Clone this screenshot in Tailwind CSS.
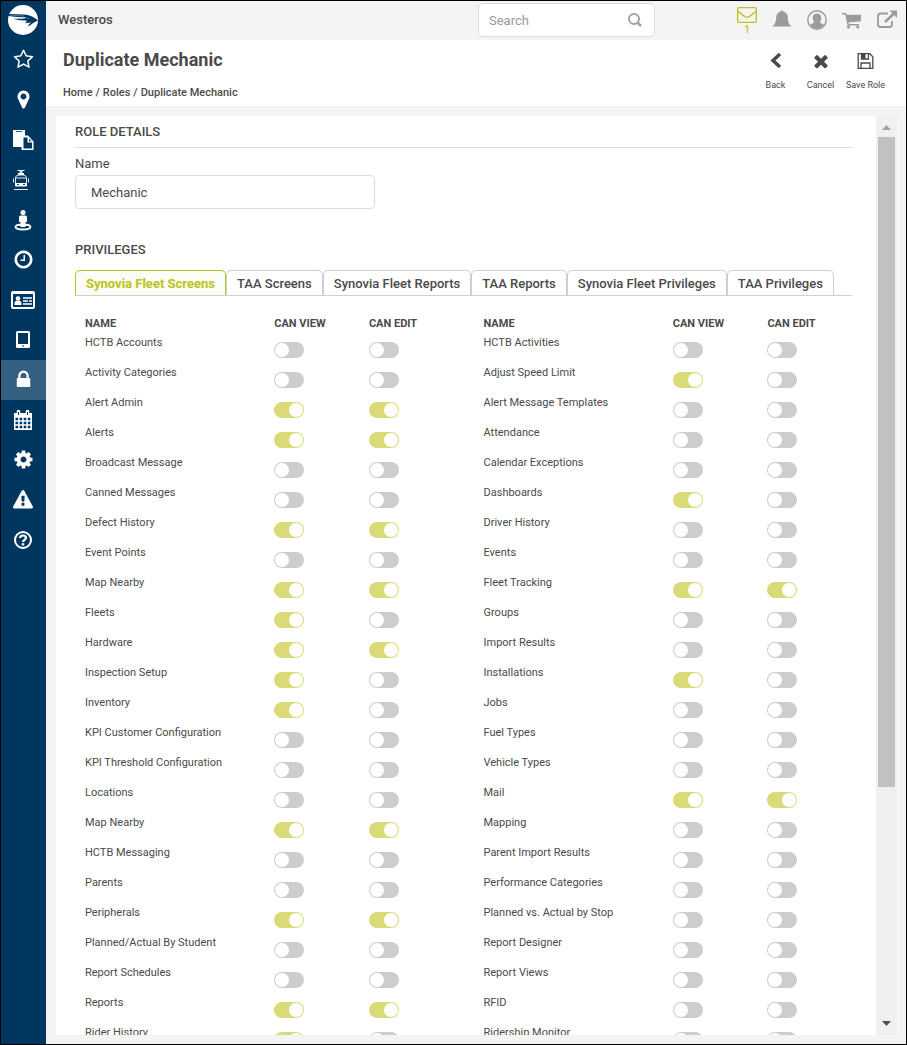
<!DOCTYPE html>
<html lang="en">
  <head>
    <meta charset="UTF-8" />
    <meta name="viewport" content="width=device-width, initial-scale=1.0" />
    <title>Duplicate Mechanic</title>
    <script src="https://cdn.jsdelivr.net/npm/@tailwindcss/browser@4"></script>
  </head>
  <body class="flex h-screen overflow-hidden border border-black bg-[#f4f4f4] font-[Roboto,sans-serif] text-[#4a4a4a]">
    <!-- Sidebar -->
    <nav class="flex w-[45px] shrink-0 flex-col bg-[#003761] text-white" aria-label="Main">
      <a href="#" class="flex h-[39px] items-center justify-center pr-px pb-px" aria-label="Dashboard">
        <svg class="size-[30px]" viewBox="0 0 30 30">
          <circle cx="15" cy="15" r="15" fill="#fff" />
          <path d="M1 9l15 .5Q24 10 30 15.500 26 17 20.500 21.500q-.5-2.500 3-4l-7 .7q3-1.200 1.500-2.700-7 .5-13-2 7 .5 11 0 2.500-.5 1-1.500Q8 12.500.5 11z" fill="#003761" />
          <path d="M2 10.200l14 .8M15 12.500l6 1" stroke="#7f9bb0" stroke-width=".600" />
        </svg>
      </a>
      <a href="#" class="flex h-10 items-center justify-center pr-px pb-0.5" aria-label="Favorites">
        <svg class="size-[21px]" viewBox="0 0 1792 1792" fill="currentColor"><path d="M1201 1004l306-297-422-62-189-382-189 382-422 62 306 297-73 421 378-199 377 199zm527-357q0 22-26 48l-363 354 86 500q1 7 1 20 0 50-41 50-19 0-40-12l-449-236-449 236q-22 12-40 12-21 0-31.5-14.5t-10.5-35.5q0-6 2-20l86-500-364-354q-25-27-25-48 0-37 56-46l502-73 225-455q19-41 49-41t49 41l225 455 502 73q56 9 56 46z" /></svg>
      </a>
      <a href="#" class="flex h-10 items-center justify-center pr-px pb-0.5" aria-label="Map">
        <svg class="size-[21px]" viewBox="0 0 1792 1792" fill="currentColor"><path d="M1152 640q0-106-75-181t-181-75-181 75-75 181 75 181 181 75 181-75 75-181zm256 0q0 109-33 179l-364 774q-16 33-47.5 52t-67.5 19-67.5-19-46.5-52l-365-774q-33-70-33-179 0-212 150-362t362-150 362 150 150 362z" /></svg>
      </a>
      <a href="#" class="flex h-10 items-center justify-center pr-px" aria-label="Documents">
        <svg class="size-6" viewBox="0 0 24 24">
          <path d="M2 2h12v6h-3v11H2z" fill="#fff" />
          <path d="M5 3.500h6" stroke="#003761" stroke-width=".800" />
          <path d="M10.500 7.500h6.500l5.500 6v8.500h-12z" fill="#fff" />
          <path d="M12.500 9.500h4v5h4.500v6h-8.500z" fill="#003761" />
          <path d="M18 10.500l2.500 2.800H18z" fill="#003761" />
        </svg>
      </a>
      <a href="#" class="flex h-10 items-center justify-center pr-[5px]" aria-label="Buses">
        <svg class="h-[22px] w-5" viewBox="0 0 20 22" fill="none" stroke="#fff" stroke-width=".900">
          <path d="M6.500 1.500h7M8 1.500l4 3M12 1.500l-4 3" />
          <path d="M7 4h6v2H7z" fill="#fff" stroke="none" />
          <path d="M4.500 8.500Q5 6 8 6h4q3 0 3.500 2.500v8h-11zM4.500 9h11M2.500 9.500v4M17.500 9.500v4" />
          <path d="M4 14h12v2.500q0 1-1 1H5q-1 0-1-1z" fill="#fff" stroke="none" />
          <path d="M3 20.500h14" />
          <path d="M6 15.500h2M12 15.500h2" stroke="#003761" />
        </svg>
      </a>
      <a href="#" class="flex h-10 items-center justify-center pr-px" aria-label="Students">
        <svg class="h-[22px] w-5" viewBox="0 0 20 22">
          <ellipse cx="10" cy="18" rx="7.500" ry="2.500" fill="none" stroke="#fff" stroke-width="1.800" />
          <circle cx="10" cy="3.500" r="2.500" fill="#fff" />
          <path d="M7.500 6.500h5q1.500 0 1.500 1.500v5h-1.500v5h-5v-5H6V8q0-1.500 1.500-1.500z" fill="#fff" />
        </svg>
      </a>
      <a href="#" class="flex h-10 items-center justify-center pr-px pb-0.5" aria-label="Time">
        <svg class="size-[21px]" viewBox="0 0 1792 1792" fill="currentColor"><path d="M1024 544v448q0 14-9 23t-23 9h-320q-14 0-23-9t-9-23v-64q0-14 9-23t23-9h224v-352q0-14 9-23t23-9h64q14 0 23 9t9 23zm416 352q0-148-73-273t-198-198-273-73-273 73-198 198-73 273 73 273 198 198 273 73 273-73 198-198 73-273zm224 0q0 209-103 385.500t-279.500 279.500-385.500 103-385.500-103-279.500-279.500-103-385.500 103-385.500 279.500-279.500 385.500-103 385.500 103 279.500 279.500 103 385.500z" /></svg>
      </a>
      <a href="#" class="flex h-10 items-center justify-center pr-px" aria-label="ID cards">
        <svg class="h-[18px] w-6" viewBox="0 0 24 18">
          <rect x="1" y="1" width="22" height="16" rx="1" fill="none" stroke="#fff" stroke-width="2" />
          <path d="M1 2h22" stroke="#fff" stroke-width="2" />
          <circle cx="7" cy="7.500" r="2.300" fill="#fff" />
          <path d="M3.500 14v-2q0-2.500 3.500-2.500t3.500 2.500v2z" fill="#fff" />
          <path d="M12 7h9M12 10h5M18 10h3M12 13h9" stroke="#fff" stroke-width="1.500" />
        </svg>
      </a>
      <a href="#" class="flex h-10 items-center justify-center pr-px pb-px" aria-label="Tablets">
        <svg class="h-[17px] w-[14px]" viewBox="0 0 14 17">
          <rect width="14" height="17" rx="1.500" fill="#fff" />
          <path d="M2 2h10v11H2z" fill="#003761" />
          <path d="M6 15h2" stroke="#003761" />
        </svg>
      </a>
      <a href="#" class="flex h-10 items-center justify-center bg-[#335f81] pr-px pb-0.5" aria-label="Security" aria-current="page">
        <svg class="size-[21px]" viewBox="0 0 1792 1792" fill="currentColor"><path d="M640 768h512v-192q0-106-75-181t-181-75-181 75-75 181v192zm832 96v576q0 40-28 68t-68 28h-960q-40 0-68-28t-28-68v-576q0-40 28-68t68-28h32v-192q0-184 132-316t316-132 316 132 132 316v192h32q40 0 68 28t28 68z" /></svg>
      </a>
      <a href="#" class="flex h-10 items-center justify-center pr-px" aria-label="Calendar">
        <svg class="size-5" viewBox="0 0 20 20">
          <path d="M1 3h18v17H1z" fill="#fff" />
          <path d="M5.500 1.500v3M14.500 1.500v3" stroke="#fff" stroke-width="3.500" stroke-linecap="round" />
          <path d="M5.500 2v3M14.500 2v3" stroke="#003761" />
          <path d="M2.500 9h15M2.500 13h15M2.500 17h15" stroke="#003761" stroke-width="2.500" stroke-dasharray="2.600 1.500" />
        </svg>
      </a>
      <a href="#" class="flex h-10 items-center justify-center pr-px pb-0.5" aria-label="Settings">
        <svg class="size-[21px]" viewBox="0 0 1792 1792" fill="currentColor"><path d="M1152 896q0-106-75-181t-181-75-181 75-75 181 75 181 181 75 181-75 75-181zm512-109v222q0 12-8 23t-20 13l-185 28q-19 54-39 91 35 50 107 138 10 12 10 25t-9 23q-27 37-99 108t-94 71q-12 0-26-9l-138-108q-44 23-91 38-16 136-29 186-7 28-36 28h-222q-14 0-24.500-8.500t-11.500-21.500l-28-184q-49-16-90-37l-141 107q-10 9-25 9-14 0-25-11-126-114-165-168-7-10-7-23 0-12 8-23 15-21 51-66.500t54-70.500q-27-50-41-99l-183-27q-13-2-21-12.500t-8-23.500v-222q0-12 8-23t19-13l186-28q14-46 39-92-40-57-107-138-10-12-10-24 0-10 9-23 26-36 98.500-107.500t94.500-71.500q13 0 26 10l138 107q44-23 91-38 16-136 29-186 7-28 36-28h222q14 0 24.500 8.500t11.500 21.500l28 184q49 16 90 37l142-107q9-9 24-9 13 0 25 10 129 119 165 170 7 8 7 22 0 12-8 23-15 21-51 66.500t-54 70.500q26 50 41 98l183 28q13 2 21 12.500t8 23.500z" /></svg>
      </a>
      <a href="#" class="flex h-10 items-center justify-center pr-px" aria-label="Alerts">
        <svg class="size-5" viewBox="0 0 1792 1792" fill="currentColor"><path d="M1024 1375v-190q0-14-9.500-23.500t-22.500-9.500h-192q-13 0-22.500 9.500t-9.500 23.500v190q0 14 9.500 23.500t22.500 9.500h192q13 0 22.500-9.500t9.500-23.500zm-2-374l18-459q0-12-10-19-13-11-24-11h-220q-11 0-24 11-10 7-10 21l17 457q0 10 10 16.500t24 6.500h185q14 0 23.500-6.500t10.500-16.500zm-14-934l768 1408q35 63-2 126-17 29-46.500 46t-63.500 17h-1536q-34 0-63.500-17t-46.500-46q-37-63-2-126l768-1408q17-31 47-49t65-18 65 18 47 49z" /></svg>
      </a>
      <a href="#" class="flex h-10 items-center justify-center pr-px" aria-label="Help">
        <svg class="size-5" viewBox="0 0 20 20" fill="none" stroke="#fff">
          <circle cx="10" cy="10" r="8" stroke-width="2" />
          <path d="M6.800 8Q7.300 5.500 10 5.500t3 2.300c0 2-3 2-3 4.200" stroke-width="2.200" />
          <path d="M10 13.200v2.300" stroke-width="2.400" />
        </svg>
      </a>
    </nav>

    <div class="flex min-w-0 flex-1 flex-col">
      <!-- Top bar -->
      <header class="flex h-[39px] shrink-0 items-center pr-[9px] pb-px pl-3">
        <span class="text-[13px] font-medium">Westeros</span>
        <div class="ml-auto flex h-[34px] w-[177px] items-center rounded-[5px] border border-[#dcdcdc] bg-white px-2.5">
          <input type="search" placeholder="Search" aria-label="Search" class="min-w-0 flex-1 pt-px text-[13px] outline-none placeholder:text-[#999]" />
          <svg class="mr-0.5 size-[14px] shrink-0" viewBox="0 0 14 14" fill="none" stroke="#a3a3a3" stroke-width="2"><circle cx="6" cy="6" r="5" /><path d="M9 9l4 4" stroke-width="2.500" /></svg>
        </div>
        <div class="ml-[82px] flex items-center gap-[15px] text-[#9b9b9b]">
          <a href="#" class="flex w-5 flex-col items-center pt-1 text-[#bdc220]" aria-label="1 message">
            <svg class="h-4 w-5" viewBox="0 0 20 16" fill="none" stroke="currentColor" stroke-width="1.300"><rect x=".700" y=".700" width="18.600" height="14.600" rx="1" /><path d="M1 4q5 5 9 6.500Q14 9 19 4" /></svg>
            <span class="text-[10px] leading-[14px] font-medium">1</span>
          </a>
          <a href="#" aria-label="Notifications">
            <svg class="h-5 w-5" viewBox="0 0 20 20" fill="currentColor"><path d="M10 0q1.200 0 1.200 1.500Q15.500 2.500 15.800 7c.2 5 1 7 3.700 9.500H.5C3.200 14 4 12 4.200 7 4.500 2.500 8.800 1.500 8.800 1.500 8.800 0 10 0zM7.500 17.500h5q-.5 2.500-2.500 2.500t-2.500-2.500z" /></svg>
          </a>
          <a href="#" aria-label="Account">
            <svg class="size-5" viewBox="0 0 20 20"><circle cx="10" cy="10" r="9.200" fill="none" stroke="currentColor" stroke-width="1.400" /><path d="M10 3.500c3 0 4.300 2 4.300 4.500 0 1.500-.6 3-1.600 4 .3 1.200 2.300 1.300 4.300 2.800A8.300 8.300 0 0 1 3 14.800c2-1.500 4-1.600 4.300-2.800-1-1-1.600-2.500-1.600-4 0-2.500 1.300-4.500 4.300-4.500z" fill="currentColor" /></svg>
          </a>
          <a href="#" aria-label="Cart">
            <svg class="h-5 w-5" viewBox="0 0 20 20" fill="currentColor"><path d="M0 3h4.200l.5 1.800H19v6.400L6.500 12.500l.3 1.500H17v1.500H5.500L3.200 4.500H0z" /><circle cx="6.500" cy="17" r="1.600" /><circle cx="15.800" cy="17" r="1.600" /></svg>
          </a>
          <a href="#" aria-label="Open in new window">
            <svg class="h-5 w-5" viewBox="0 0 20 20" fill="none" stroke="currentColor"><path d="M11 3.500H3.500Q1 3.500 1 6v8.500Q1 17 3.500 17h9q2.500 0 2.500-2.500V11" stroke-width="1.800" /><path d="M8 12L17 3.500" stroke-width="2.500" /><path d="M12.500.500H20V8z" fill="currentColor" stroke="none" /></svg>
          </a>
        </div>
      </header>

      <!-- Page header -->
      <section class="flex h-[66px] shrink-0 justify-between bg-white pr-[18px] pl-[17px]">
        <div>
          <h1 class="pt-2 text-[18px] leading-6 font-bold">Duplicate Mechanic</h1>
          <nav class="flex gap-[3px] pt-3 text-[11px] leading-[18px] font-medium" aria-label="Breadcrumb">
            <a href="#">Home</a><span>/</span><a href="#">Roles</a><span>/</span><span>Duplicate Mechanic</span>
          </nav>
        </div>
        <div class="flex pt-[11px] text-[9px] leading-3">
          <button type="button" class="flex w-[45px] flex-col items-center gap-2">
            <svg class="size-5" viewBox="0 0 20 20" fill="none" stroke="currentColor" stroke-width="3.500"><path d="M14 3L7 9.500l7 6.500" /></svg>
            Back
          </button>
          <button type="button" class="flex w-[45px] flex-col items-center gap-2">
            <svg class="size-5" viewBox="0 0 1792 1792" fill="currentColor"><path d="M1490 1322q0 40-28 68l-136 136q-28 28-68 28t-68-28l-294-294-294 294q-28 28-68 28t-68-28l-136-136q-28-28-28-68t28-68l294-294-294-294q-28-28-28-68t28-68l136-136q28-28 68-28t68 28l294 294 294-294q28-28 68-28t68 28l136 136q28 28 28 68t-28 68l-294 294 294 294q28 28 28 68z" /></svg>
            Cancel
          </button>
          <button type="button" class="flex w-[45px] flex-col items-center gap-2 whitespace-nowrap">
            <svg class="size-5" viewBox="0 0 20 20" fill="none" stroke="currentColor" stroke-width="1.300"><path d="M2.200 2.700h11.600l3 3v11.600H2.200z" /><path d="M5 17v-5h9v5M5.500 3v5h7V3" /><path d="M5 2.500h4.500V8H5z" fill="currentColor" stroke="none" /></svg>
            Save Role
          </button>
        </div>
      </section>

      <!-- Content -->
      <div class="flex min-h-0 flex-1 pt-2.5 pr-[9px] pb-[9px] pl-2.5">
        <main class="min-w-0 flex-1 overflow-hidden bg-white pr-6 pl-[19px]">
          <h2 class="border-b border-[#dedede] pt-2 pb-[7px] text-[13px] leading-4 font-medium">ROLE DETAILS</h2>
          <label for="role-name" class="block pt-[7px] text-[13px] leading-[18px]">Name</label>
          <input id="role-name" type="text" value="Mechanic" class="mt-0.5 block h-[34px] w-[300px] rounded-[4px] border border-[#dcdcdc] px-[15px] text-[13px] outline-none" />

          <h2 class="pt-8 text-[13px] leading-[18px] font-medium">PRIVILEGES</h2>
          <div class="mt-[11px] flex border-b border-[#cfcfcf] text-[13px] leading-6 font-medium whitespace-nowrap" role="tablist">
            <button type="button" role="tab" aria-selected="true" class="rounded-t-[5px] border border-b-0 border-[#bdc220] bg-[#fbfcf3] px-2.5 pt-px leading-[23px] font-bold text-[#bdc220]">Synovia Fleet Screens</button>
            <button type="button" role="tab" class="rounded-t-[5px] border border-b-0 border-[#cfcfcf] px-2.5 pt-px leading-[23px]">TAA Screens</button>
            <button type="button" role="tab" class="rounded-t-[5px] border border-b-0 border-[#cfcfcf] px-2.5 pt-px leading-[23px]">Synovia Fleet Reports</button>
            <button type="button" role="tab" class="rounded-t-[5px] border border-b-0 border-[#cfcfcf] px-2.5 pt-px leading-[23px]">TAA Reports</button>
            <button type="button" role="tab" class="rounded-t-[5px] border border-b-0 border-[#cfcfcf] px-2.5 pt-px leading-[23px]">Synovia Fleet Privileges</button>
            <button type="button" role="tab" class="rounded-t-[5px] border border-b-0 border-[#cfcfcf] px-2.5 pt-px leading-[23px]">TAA Privileges</button>
          </div>

          <div id="privileges" class="-mr-5 grid grid-cols-2 pt-[18px]"></div>
        </main>

        <!-- Scroll bar -->
        <div class="flex w-[21px] shrink-0 flex-col items-center bg-[#f0f0f0]" aria-hidden="true">
          <svg class="h-[21px] w-[17px] shrink-0" viewBox="0 0 17 21" fill="#a3a3a3"><path d="M4 14l4.500-5 4.500 5z" /></svg>
          <div class="w-[17px] flex-[650] bg-[#c1c1c1]"></div>
          <div class="flex-[227]"></div>
          <svg class="h-[21px] w-[17px] shrink-0" viewBox="0 0 17 21" fill="#505050"><path d="M4 7l4.500 5L13 7z" /></svg>
        </div>
      </div>
    </div>

    <script>
      // [name, can view, can edit]
      const columns = [
        [
          ["HCTB Accounts", 0, 0],
          ["Activity Categories", 0, 0],
          ["Alert Admin", 1, 1],
          ["Alerts", 1, 1],
          ["Broadcast Message", 0, 0],
          ["Canned Messages", 0, 0],
          ["Defect History", 1, 1],
          ["Event Points", 0, 0],
          ["Map Nearby", 1, 1],
          ["Fleets", 1, 0],
          ["Hardware", 1, 1],
          ["Inspection Setup", 1, 0],
          ["Inventory", 1, 0],
          ["KPI Customer Configuration", 0, 0],
          ["KPI Threshold Configuration", 0, 0],
          ["Locations", 0, 0],
          ["Map Nearby", 1, 1],
          ["HCTB Messaging", 0, 0],
          ["Parents", 0, 0],
          ["Peripherals", 1, 1],
          ["Planned/Actual By Student", 0, 0],
          ["Report Schedules", 0, 0],
          ["Reports", 1, 1],
          ["Rider History", 1, 0],
        ],
        [
          ["HCTB Activities", 0, 0],
          ["Adjust Speed Limit", 1, 0],
          ["Alert Message Templates", 0, 0],
          ["Attendance", 0, 0],
          ["Calendar Exceptions", 0, 0],
          ["Dashboards", 1, 0],
          ["Driver History", 0, 0],
          ["Events", 0, 0],
          ["Fleet Tracking", 1, 1],
          ["Groups", 0, 0],
          ["Import Results", 0, 0],
          ["Installations", 1, 0],
          ["Jobs", 0, 0],
          ["Fuel Types", 0, 0],
          ["Vehicle Types", 0, 0],
          ["Mail", 1, 1],
          ["Mapping", 0, 0],
          ["Parent Import Results", 0, 0],
          ["Performance Categories", 0, 0],
          ["Planned vs. Actual by Stop", 0, 0],
          ["Report Designer", 0, 0],
          ["Report Views", 0, 0],
          ["RFID", 0, 0],
          ["Ridership Monitor", 0, 0],
        ],
      ];

      const toggle = (label, on) => `
        <td class="p-0 pt-2.5 align-top">
          <input type="checkbox" aria-label="${label}" ${on ? "checked" : ""}
            class="block h-4 w-[30px] appearance-none rounded-full bg-[#cdcdcd] p-px before:block before:size-[14px] before:rounded-full before:bg-white checked:bg-[#dadb78] checked:before:ml-[14px]" />
        </td>`;

      document.getElementById("privileges").innerHTML = columns
        .map(
          (rows) => `
          <div class="px-2.5">
            <table class="w-full table-fixed text-left text-[11px]">
              <thead>
                <tr class="h-[18px] leading-4">
                  <th class="w-1/2 p-0 pt-0.5 font-bold">NAME</th>
                  <th class="w-1/4 p-0 pt-0.5 font-bold">CAN VIEW</th>
                  <th class="w-1/4 p-0 pt-0.5 font-bold">CAN EDIT</th>
                </tr>
              </thead>
              <tbody>
                ${rows
                  .map(
                    ([name, view, edit]) => `
                  <tr class="h-[30px]">
                    <td class="p-0 align-top leading-[22px]">${name}</td>
                    ${toggle(name + " can view", view)}
                    ${toggle(name + " can edit", edit)}
                  </tr>`
                  )
                  .join("")}
              </tbody>
            </table>
          </div>`
        )
        .join("");
    </script>
  </body>
</html>
